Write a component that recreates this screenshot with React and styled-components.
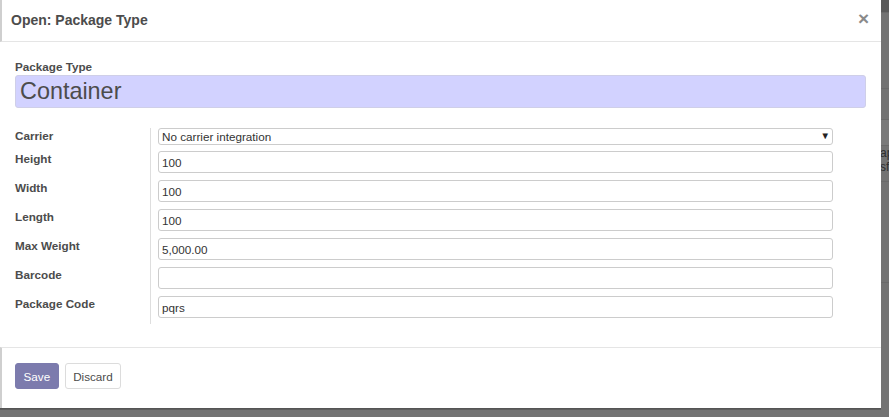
import React from "react";
import styled, { createGlobalStyle } from "styled-components";

const Global = createGlobalStyle`
  html, body { margin: 0; padding: 0; }
  body {
    background: #737373;
    font-family: "Liberation Sans", Arial, Helvetica, sans-serif;
    font-size: 11.7px;
    color: #4c4c4c;
    overflow: hidden;
  }
`;

const Page = styled.div`
  display: flex;
  width: 889px;
  height: 417px;
  background: #737373;
`;

const Modal = styled.div`
  width: 881px;
  height: 408px;
  background: #fff;
  display: flex;
  flex-direction: column;
  box-shadow: 0 1px 0 #555, 0 2px 0 #5e5e5e;
  flex-shrink: 0;
`;

const Header = styled.div`
  height: 42px;
  border-bottom: 1px solid #e5e5e5;
  border-left: 2px solid #cfcfcf;
  display: flex;
  align-items: center;
  justify-content: space-between;
  padding: 0 12px 0 9px;
`;

const Title = styled.h4`
  margin: 0;
  font-size: 14px;
  font-weight: bold;
  color: #4c4c4c;
`;

const Close = styled.span`
  font-size: 19px;
  font-weight: bold;
  color: #8a8a8a;
  line-height: 1;
  margin-top: -4px;
`;

const Body = styled.div`
  padding: 16px 15px 23px 15px;
  display: flex;
  flex-direction: column;
`;

const SmallLabel = styled.label`
  font-weight: bold;
  line-height: 17.5px;
  display: block;
`;

const NameInput = styled.input`
  box-sizing: border-box;
  width: 851px;
  height: 33px;
  background: #d2d2ff;
  border: 1px solid #cfcfe8;
  border-radius: 3px;
  font-family: inherit;
  font-size: 23.4px;
  color: #4c4c4c;
  padding: 0 4px;
  outline: none;
`;

const Group = styled.div`
  margin-top: 20px;
  display: grid;
  grid-template-columns: 135px 1fr;
  width: 818px;
`;

const LabelCell = styled.div`
  font-weight: bold;
  line-height: 16px;
  color: #4c4c4c;
`;

const FieldCell = styled.div`
  border-left: 1px solid #dedede;
  padding-left: 7px;
  padding-bottom: ${(p) => p.$gap}px;
`;

const TextInput = styled.input`
  box-sizing: border-box;
  display: block;
  width: 675px;
  height: 22px;
  border: 1px solid #cccccc;
  border-radius: 3px;
  font-family: inherit;
  font-size: 11.7px;
  color: #333;
  padding: 0 3px;
  outline: none;
  background: #fff;
`;

const SelectWrap = styled.div`
  position: relative;
  width: 675px;
`;

const Select = styled.select`
  box-sizing: border-box;
  display: block;
  width: 675px;
  height: 17px;
  border: 1px solid #cccccc;
  border-radius: 3px;
  font-family: inherit;
  font-size: 11.7px;
  color: #333;
  padding: 0 3px;
  background: #fff;
  appearance: none;
  -webkit-appearance: none;
  outline: none;
`;

const Arrow = styled.span`
  position: absolute;
  right: 3px;
  top: 3px;
  font-size: 9.5px;
  line-height: 1;
  color: #222;
  pointer-events: none;
`;

const Footer = styled.div`
  border-top: 1px solid #e5e5e5;
  border-left: 2px solid #cfcfcf;
  padding: 15px 13px 19px;
  display: flex;
  gap: 6px;
  margin-top: auto;
`;

const Button = styled.button`
  height: 26px;
  padding: 0 7.5px;
  border-radius: 3px;
  font-family: inherit;
  font-size: 11.7px;
  cursor: pointer;
  border: 1px solid ${(p) => (p.$primary ? "#7c7bad" : "#dcdcdc")};
  background: ${(p) => (p.$primary ? "#7c7bad" : "#fff")};
  color: ${(p) => (p.$primary ? "#fff" : "#4c4c4c")};
`;

const Behind = styled.div`
  flex: 1;
  overflow: hidden;
  display: flex;
  flex-direction: column;
`;

const BehindRow = styled.div`
  height: ${(p) => p.$h}px;
  border-bottom: 1px solid #6a6a6a;
  color: #2e2e2e;
  font-size: 12px;
  line-height: 14px;
  white-space: nowrap;
  margin-left: -1px;
  background: ${(p) => p.$bg || "transparent"};
`;

const fields = [
  { label: "Height", value: "100" },
  { label: "Width", value: "100" },
  { label: "Length", value: "100" },
  { label: "Max Weight", value: "5,000.00" },
  { label: "Barcode", value: "" },
  { label: "Package Code", value: "pqrs" },
];

export default function App() {
  return (
    <>
      <Global />
      <Page>
        <Modal>
          <Header>
            <Title>Open: Package Type</Title>
            <Close>×</Close>
          </Header>
          <Body>
            <SmallLabel>Package Type</SmallLabel>
            <NameInput defaultValue="Container" />
            <Group>
              <LabelCell>Carrier</LabelCell>
              <FieldCell $gap={6}>
                <SelectWrap>
                  <Select defaultValue="none">
                    <option value="none">No carrier integration</option>
                  </Select>
                  <Arrow>▼</Arrow>
                </SelectWrap>
              </FieldCell>
              {fields.map((f, i) => (
                <React.Fragment key={f.label}>
                  <LabelCell>{f.label}</LabelCell>
                  <FieldCell $gap={i === fields.length - 1 ? 6 : 7}>
                    <TextInput defaultValue={f.value} />
                  </FieldCell>
                </React.Fragment>
              ))}
            </Group>
          </Body>
          <Footer>
            <Button $primary>Save</Button>
            <Button>Discard</Button>
          </Footer>
        </Modal>
        <Behind>
          <BehindRow $h={12} $bg="#5a5a5a" />
          <BehindRow $h={75} />
          <BehindRow $h={30} />
          <BehindRow $h={25} $bg="#7a7a7a" />
          <BehindRow $h={35}>
            ap
            <br />
            sf
          </BehindRow>
          <BehindRow $h={100} />
        </Behind>
      </Page>
    </>
  );
}
